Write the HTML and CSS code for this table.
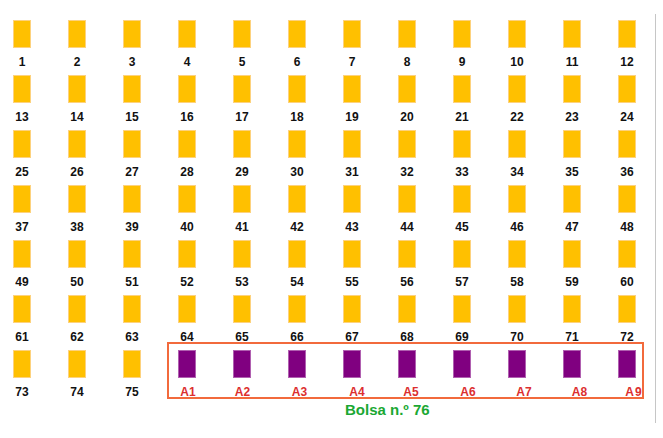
FILE: index.html
```html
<!DOCTYPE html>
<html>
<head>
<meta charset="utf-8">
<link rel="stylesheet" href="styles.css">
</head>
<body>
<div class="frame">
  <div class="grid" id="grid">
    <div class="cell"><div class="card"></div><div class="num">1</div></div>
    <div class="cell"><div class="card"></div><div class="num">2</div></div>
    <div class="cell"><div class="card"></div><div class="num">3</div></div>
    <div class="cell"><div class="card"></div><div class="num">4</div></div>
    <div class="cell"><div class="card"></div><div class="num">5</div></div>
    <div class="cell"><div class="card"></div><div class="num">6</div></div>
    <div class="cell"><div class="card"></div><div class="num">7</div></div>
    <div class="cell"><div class="card"></div><div class="num">8</div></div>
    <div class="cell"><div class="card"></div><div class="num">9</div></div>
    <div class="cell"><div class="card"></div><div class="num">10</div></div>
    <div class="cell"><div class="card"></div><div class="num">11</div></div>
    <div class="cell"><div class="card"></div><div class="num">12</div></div>
    <div class="cell"><div class="card"></div><div class="num">13</div></div>
    <div class="cell"><div class="card"></div><div class="num">14</div></div>
    <div class="cell"><div class="card"></div><div class="num">15</div></div>
    <div class="cell"><div class="card"></div><div class="num">16</div></div>
    <div class="cell"><div class="card"></div><div class="num">17</div></div>
    <div class="cell"><div class="card"></div><div class="num">18</div></div>
    <div class="cell"><div class="card"></div><div class="num">19</div></div>
    <div class="cell"><div class="card"></div><div class="num">20</div></div>
    <div class="cell"><div class="card"></div><div class="num">21</div></div>
    <div class="cell"><div class="card"></div><div class="num">22</div></div>
    <div class="cell"><div class="card"></div><div class="num">23</div></div>
    <div class="cell"><div class="card"></div><div class="num">24</div></div>
    <div class="cell"><div class="card"></div><div class="num">25</div></div>
    <div class="cell"><div class="card"></div><div class="num">26</div></div>
    <div class="cell"><div class="card"></div><div class="num">27</div></div>
    <div class="cell"><div class="card"></div><div class="num">28</div></div>
    <div class="cell"><div class="card"></div><div class="num">29</div></div>
    <div class="cell"><div class="card"></div><div class="num">30</div></div>
    <div class="cell"><div class="card"></div><div class="num">31</div></div>
    <div class="cell"><div class="card"></div><div class="num">32</div></div>
    <div class="cell"><div class="card"></div><div class="num">33</div></div>
    <div class="cell"><div class="card"></div><div class="num">34</div></div>
    <div class="cell"><div class="card"></div><div class="num">35</div></div>
    <div class="cell"><div class="card"></div><div class="num">36</div></div>
    <div class="cell"><div class="card"></div><div class="num">37</div></div>
    <div class="cell"><div class="card"></div><div class="num">38</div></div>
    <div class="cell"><div class="card"></div><div class="num">39</div></div>
    <div class="cell"><div class="card"></div><div class="num">40</div></div>
    <div class="cell"><div class="card"></div><div class="num">41</div></div>
    <div class="cell"><div class="card"></div><div class="num">42</div></div>
    <div class="cell"><div class="card"></div><div class="num">43</div></div>
    <div class="cell"><div class="card"></div><div class="num">44</div></div>
    <div class="cell"><div class="card"></div><div class="num">45</div></div>
    <div class="cell"><div class="card"></div><div class="num">46</div></div>
    <div class="cell"><div class="card"></div><div class="num">47</div></div>
    <div class="cell"><div class="card"></div><div class="num">48</div></div>
    <div class="cell"><div class="card"></div><div class="num">49</div></div>
    <div class="cell"><div class="card"></div><div class="num">50</div></div>
    <div class="cell"><div class="card"></div><div class="num">51</div></div>
    <div class="cell"><div class="card"></div><div class="num">52</div></div>
    <div class="cell"><div class="card"></div><div class="num">53</div></div>
    <div class="cell"><div class="card"></div><div class="num">54</div></div>
    <div class="cell"><div class="card"></div><div class="num">55</div></div>
    <div class="cell"><div class="card"></div><div class="num">56</div></div>
    <div class="cell"><div class="card"></div><div class="num">57</div></div>
    <div class="cell"><div class="card"></div><div class="num">58</div></div>
    <div class="cell"><div class="card"></div><div class="num">59</div></div>
    <div class="cell"><div class="card"></div><div class="num">60</div></div>
    <div class="cell"><div class="card"></div><div class="num">61</div></div>
    <div class="cell"><div class="card"></div><div class="num">62</div></div>
    <div class="cell"><div class="card"></div><div class="num">63</div></div>
    <div class="cell"><div class="card"></div><div class="num">64</div></div>
    <div class="cell"><div class="card"></div><div class="num">65</div></div>
    <div class="cell"><div class="card"></div><div class="num">66</div></div>
    <div class="cell"><div class="card"></div><div class="num">67</div></div>
    <div class="cell"><div class="card"></div><div class="num">68</div></div>
    <div class="cell"><div class="card"></div><div class="num">69</div></div>
    <div class="cell"><div class="card"></div><div class="num">70</div></div>
    <div class="cell"><div class="card"></div><div class="num">71</div></div>
    <div class="cell"><div class="card"></div><div class="num">72</div></div>
    <div class="cell"><div class="card"></div><div class="num">73</div></div>
    <div class="cell"><div class="card"></div><div class="num">74</div></div>
    <div class="cell"><div class="card"></div><div class="num">75</div></div>
    <div class="bag">
      <div class="cell"><div class="card purple"></div><div class="num red" style="margin-left:2px">A1</div></div>
      <div class="cell"><div class="card purple"></div><div class="num red" style="margin-left:1px">A2</div></div>
      <div class="cell"><div class="card purple"></div><div class="num red" style="margin-left:5px">A3</div></div>
      <div class="cell"><div class="card purple"></div><div class="num red" style="margin-left:10px">A4</div></div>
      <div class="cell"><div class="card purple"></div><div class="num red" style="margin-left:8px">A5</div></div>
      <div class="cell"><div class="card purple"></div><div class="num red" style="margin-left:12px">A6</div></div>
      <div class="cell"><div class="card purple"></div><div class="num red" style="margin-left:14px">A7</div></div>
      <div class="cell"><div class="card purple"></div><div class="num red" style="margin-left:15px">A8</div></div>
      <div class="cell"><div class="card purple"></div><div class="num red spaced" style="margin-left:14px">A9</div></div>
    </div>
    <div class="caption">Bolsa n.º 76</div>
  </div>
</div>
</body>
</html>
```

FILE: styles.css
```css
html, body {
  margin: 0;
  padding: 0;
  background: #ffffff;
}

body {
  font-family: "Liberation Sans", Arial, sans-serif;
}

.frame {
  width: 656px;
  height: 409px;
  margin-top: 14px;
  padding-top: 6px;
  box-sizing: border-box;
  border-right: 1px solid #c6c6c6;
}

.grid {
  display: grid;
  grid-template-columns: repeat(12, 18px);
  column-gap: 37px;
  row-gap: 6px;
  padding-left: 13px;
}

.cell {
  display: flex;
  flex-direction: column;
  align-items: center;
  width: 18px;
}

.card {
  width: 18px;
  height: 28px;
  box-sizing: border-box;
  background: #ffc000;
  border: 1px solid #fdd27e;
}

.card.purple {
  background: #800080;
  border: 1px solid #b060b0;
}

.num {
  margin-top: 8px;
  height: 13px;
  line-height: 13px;
  font-size: 12px;
  font-weight: bold;
  color: #111111;
  white-space: nowrap;
}

.num.red {
  color: #dc2f2f;
}

.num.spaced {
  letter-spacing: 1px;
}

.bag {
  grid-column: 4 / 13;
  display: grid;
  grid-template-columns: repeat(9, 18px);
  column-gap: 37px;
  margin: -8px -8px 0 -11px;
  padding: 6px 6px 0 9px;
  height: 57px;
  box-sizing: border-box;
  border: 2px solid #f26a3c;
}

.caption {
  grid-column: 7 / 13;
  margin-left: 2px;
  margin-top: -4px;
  font-size: 15px;
  font-weight: bold;
  color: #1aa833;
  white-space: nowrap;
}
```
